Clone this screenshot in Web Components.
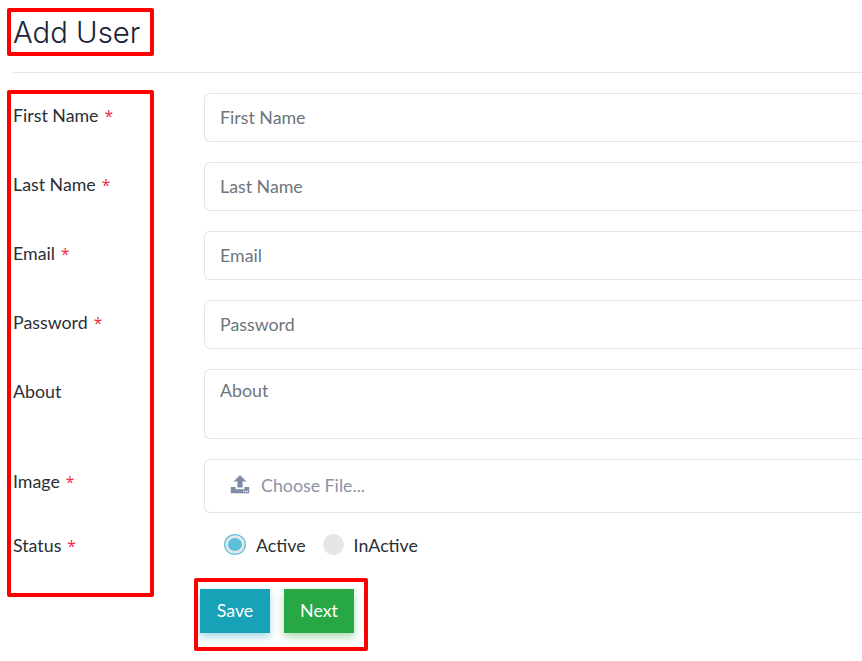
<!DOCTYPE html>
<html>
<head>
<meta charset="utf-8">
<title>Add User</title>
<style>
  html, body {
    margin: 0;
    height: 661px;
    overflow: hidden;
    background: #fff;
    font-family: "Lato", "Open Sans", sans-serif;
    color: #212529;
  }
</style>
</head>
<body>
<add-user-page>
  <page-heading>Add User</page-heading>
  <form-row label="First Name" required><text-field placeholder="First Name"></text-field></form-row>
  <form-row label="Last Name" required><text-field placeholder="Last Name"></text-field></form-row>
  <form-row label="Email" required><text-field placeholder="Email"></text-field></form-row>
  <form-row label="Password" required><text-field placeholder="Password"></text-field></form-row>
  <form-row label="About"><text-field placeholder="About" multiline></text-field></form-row>
  <form-row label="Image" required><file-field>Choose File...</file-field></form-row>
  <form-row label="Status" required compact>
    <radio-group>
      <radio-option checked>Active</radio-option>
      <radio-option>InActive</radio-option>
    </radio-group>
  </form-row>
  <form-actions>
    <action-button color="#17a2b8" glow="rgba(23, 162, 184, .4)">Save</action-button>
    <action-button color="#28a745" glow="rgba(40, 167, 69, .4)">Next</action-button>
  </form-actions>
  <mark-box style="left: 7px; top: 8px; width: 147px; height: 48px;"></mark-box>
  <mark-box style="left: 7px; top: 90px; width: 147px; height: 507px;"></mark-box>
  <mark-box style="left: 194px; top: 578px; width: 174px; height: 73px;"></mark-box>
</add-user-page>

<script>
  class AddUserPage extends HTMLElement {
    constructor() {
      super();
      this.attachShadow( {mode: 'open'} );
      this.shadowRoot.innerHTML = /* template */ `
        <style>
          :host {
            box-sizing: border-box;
            display: block;
            font-size: 17.8px;
            padding: 0 0 0 13px;
            position: relative;
          }
        </style>
        <slot></slot>
      `;
    }
  }

  class PageHeading extends HTMLElement {
    constructor() {
      super();
      this.attachShadow( {mode: 'open'} );
      this.shadowRoot.innerHTML = /* template */ `
        <style>
          :host {
            border-bottom: 1px solid #e6e6e6;
            box-sizing: border-box;
            color: #1a2433;
            display: block;
            font-family: "Inter", sans-serif;
            font-size: 29.3px;
            font-weight: 300;
            height: 73px;
            line-height: 36px;
            margin: 0 0 20px 0;
            padding: 15px 0 0 0;
          }
        </style>
        <slot></slot>
      `;
    }
  }

  class FormRow extends HTMLElement {
    constructor() {
      super();
      this.attachShadow( {mode: 'open'} );
      this.shadowRoot.innerHTML = /* template */ `
        <style>
          :host {
            display: grid;
            grid-template-columns: 191px 1fr;
            margin: 0 0 20px 0;
          }

          :host( [compact] ) {
            margin: 20px 0 32px 0;
          }

          label {
            color: #2a2f36;
            line-height: 24px;
            padding: 10px 0 0 0;
          }

          :host( [compact] ) label {
            padding: 0;
          }

          span {
            color: #f0284a;
            font-family: "Open Sans", sans-serif;
            font-size: 15.5px;
            line-height: 0;
            margin-left: 2px;
          }
        </style>
        <label></label>
        <div><slot></slot></div>
      `;
    }

    connectedCallback() {
      const $label = this.shadowRoot.querySelector( 'label' );
      $label.textContent = this.getAttribute( 'label' );
      if( this.hasAttribute( 'required' ) ) {
        const $star = document.createElement( 'span' );
        $star.textContent = ' *';
        $label.appendChild( $star );
      }
    }
  }

  class TextField extends HTMLElement {
    constructor() {
      super();
      this.attachShadow( {mode: 'open'} );
    }

    connectedCallback() {
      const multiline = this.hasAttribute( 'multiline' );
      const placeholder = this.getAttribute( 'placeholder' );
      this.shadowRoot.innerHTML = /* template */ `
        <style>
          :host {
            display: block;
          }

          input, textarea {
            background: #fff;
            border: 1px solid #e4e7ea;
            border-right: none;
            border-radius: 6px 0 0 6px;
            box-sizing: border-box;
            color: #495057;
            display: block;
            font: inherit;
            height: 49px;
            margin: 0;
            outline: none;
            padding: 0 0 2px 15px;
            resize: none;
            width: 100%;
          }

          textarea {
            height: 70px;
            line-height: 24px;
            padding: 8px 0 0 15px;
          }

          ::placeholder {
            color: #6c757d;
            opacity: 1;
          }
        </style>
        ${multiline ? '<textarea></textarea>' : '<input type="text">'}
      `;
      this.shadowRoot.querySelector( 'input, textarea' ).placeholder = placeholder;
    }
  }

  class FileField extends HTMLElement {
    constructor() {
      super();
      this.attachShadow( {mode: 'open'} );
      this.shadowRoot.innerHTML = /* template */ `
        <style>
          :host {
            align-items: center;
            border: 1px solid #e1e5ee;
            border-right: none;
            border-radius: 6px 0 0 6px;
            box-sizing: border-box;
            color: #8a94a8;
            display: flex;
            gap: 11px;
            height: 54px;
            padding: 0 0 2px 25px;
          }

          svg {
            display: block;
          }
        </style>
        <svg width="20" height="20" viewBox="0 0 20 20">
          <path fill="#7d8ba3" d="M10 0 L16.5 6.5 H12.6 V12.5 H7.4 V6.5 H3.5 Z"/>
          <path fill="#7d8ba3" d="M0.8 12 H5.6 V14.2 H14.4 V12 H19.2 V18.2 H0.8 Z"/>
          <rect x="13" y="15.8" width="1.3" height="1.2" fill="#fff"/>
          <rect x="15" y="15.8" width="1.3" height="1.2" fill="#fff"/>
          <rect x="17" y="15.8" width="1.1" height="1.2" fill="#fff"/>
        </svg>
        <slot></slot>
      `;
    }
  }

  class RadioGroup extends HTMLElement {
    constructor() {
      super();
      this.attachShadow( {mode: 'open'} );
      this.shadowRoot.innerHTML = /* template */ `
        <style>
          :host {
            align-items: center;
            display: flex;
            gap: 17px;
            height: 24px;
            padding: 0 0 0 20px;
          }
        </style>
        <slot></slot>
      `;
    }
  }

  class RadioOption extends HTMLElement {
    constructor() {
      super();
      this.attachShadow( {mode: 'open'} );
      this.shadowRoot.innerHTML = /* template */ `
        <style>
          :host {
            align-items: center;
            color: #2a2f36;
            display: flex;
            gap: 10px;
            line-height: 24px;
          }

          i {
            background: #e6e6e6;
            border-radius: 50%;
            box-sizing: border-box;
            display: block;
            height: 21px;
            margin: -2px 0 0 0;
            width: 21px;
          }

          :host( [checked] ) i {
            background: #5bc0de;
            border: 1px solid #5bc0de;
            box-shadow: inset 0 0 0 3px #e6e6e6;
            width: 22px;
          }
        </style>
        <i></i>
        <slot></slot>
      `;
    }
  }

  class FormActions extends HTMLElement {
    constructor() {
      super();
      this.attachShadow( {mode: 'open'} );
      this.shadowRoot.innerHTML = /* template */ `
        <style>
          :host {
            display: flex;
            gap: 14px;
            margin: 0 0 0 187px;
          }
        </style>
        <slot></slot>
      `;
    }
  }

  class ActionButton extends HTMLElement {
    constructor() {
      super();
      this.attachShadow( {mode: 'open'} );
      this.shadowRoot.innerHTML = /* template */ `
        <style>
          :host {
            display: block;
          }

          button {
            background: var( --button-color );
            border: none;
            box-shadow: 0 4px 8px var( --button-glow );
            color: #fff;
            cursor: pointer;
            display: block;
            font: inherit;
            height: 44px;
            padding: 0 0 2px 0;
            width: 70px;
          }
        </style>
        <button><slot></slot></button>
      `;
    }

    connectedCallback() {
      this.style.setProperty( '--button-color', this.getAttribute( 'color' ) );
      this.style.setProperty( '--button-glow', this.getAttribute( 'glow' ) );
    }
  }

  // Red annotation drawn over the form
  class MarkBox extends HTMLElement {
    constructor() {
      super();
      this.attachShadow( {mode: 'open'} );
      this.shadowRoot.innerHTML = /* template */ `
        <style>
          :host {
            border: 4px solid #ff0000;
            border-radius: 2px;
            box-sizing: border-box;
            display: block;
            pointer-events: none;
            position: absolute;
          }
        </style>
      `;
    }
  }

  window.customElements.define( 'add-user-page', AddUserPage );
  window.customElements.define( 'page-heading', PageHeading );
  window.customElements.define( 'form-row', FormRow );
  window.customElements.define( 'text-field', TextField );
  window.customElements.define( 'file-field', FileField );
  window.customElements.define( 'radio-group', RadioGroup );
  window.customElements.define( 'radio-option', RadioOption );
  window.customElements.define( 'form-actions', FormActions );
  window.customElements.define( 'action-button', ActionButton );
  window.customElements.define( 'mark-box', MarkBox );
</script>
</body>
</html>
